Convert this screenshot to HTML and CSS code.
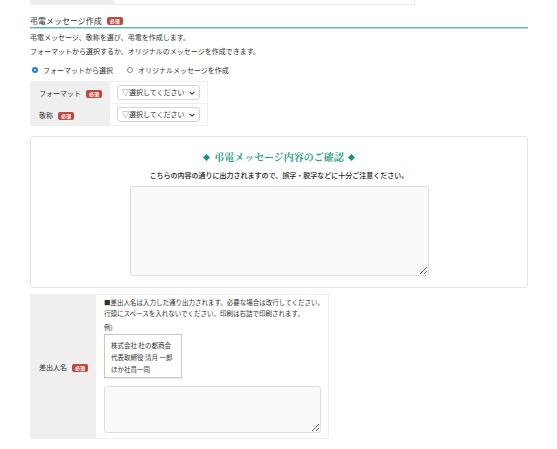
FILE: index.html
```html
<!DOCTYPE html>
<html lang="ja">
<head>
<meta charset="utf-8">
<title>弔電メッセージ作成</title>
<link rel="stylesheet" href="styles.css">
</head>
<body>
<div class="page">
  <div class="prev-row"><div class="prev-label"></div><div class="prev-value"></div></div>

  <h2 class="sec-title">弔電メッセージ作成<span class="badge">必須</span></h2>
  <p class="desc">弔電メッセージ、敬称を選び、弔電を作成します。<br>フォーマットから選択するか、オリジナルのメッセージを作成できます。</p>

  <div class="radios">
    <label class="radio"><span class="dot checked"></span>フォーマットから選択</label>
    <label class="radio"><span class="dot"></span>オリジナルメッセージを作成</label>
  </div>

  <table class="fmt-table">
    <tr>
      <th>フォーマット<span class="badge">必須</span></th>
      <td><div class="select">▽選択してください<svg class="chev" viewBox="0 0 8 5" width="6" height="4"><path d="M1 1l3 3 3-3" fill="none" stroke="#333" stroke-width="1.4"/></svg></div></td>
    </tr>
    <tr>
      <th>敬称<span class="badge">必須</span></th>
      <td><div class="select">▽選択してください<svg class="chev" viewBox="0 0 8 5" width="6" height="4"><path d="M1 1l3 3 3-3" fill="none" stroke="#333" stroke-width="1.4"/></svg></div></td>
    </tr>
  </table>

  <div class="preview">
    <h3 class="preview-title"><span class="diamond"></span>弔電メッセージ内容のご確認<span class="diamond"></span></h3>
    <p class="preview-note">こちらの内容の通りに出力されますので、誤字・脱字などに十分ご注意ください。</p>
    <textarea class="preview-area" readonly></textarea>
  </div>

  <table class="sender-table">
    <tr>
      <th>差出人名<span class="badge">必須</span></th>
      <td>
        <p class="note">■差出人名は入力した通り出力されます。必要な場合は改行してください。<br>行頭にスペースを入れないでください。印刷は右詰で印刷されます。</p>
        <p class="ex-label">例)</p>
        <div class="example">株式会社 杜の都商会<br>代表取締役 清月 一郎<br>ほか社員一同</div>
        <textarea class="sender-area"></textarea>
      </td>
    </tr>
  </table>
</div>
</body>
</html>
```

FILE: styles.css
```css
* { box-sizing: border-box; }
html, body { margin: 0; padding: 0; background: #fff; }
body {
  font-family: "Noto Sans CJK JP", "Noto Sans", sans-serif;
  color: #333;
  font-size: 7px;
}
.page { padding: 0 29px 0 30px; }

.prev-row { display: flex; width: 385px; height: 5px; border-bottom: 1px solid #ececec; border-right: 1px solid #ececec; }
.prev-label { width: 85px; background: #efefef; }
.prev-value { flex: 1; }

.sec-title {
  margin: 9px 0 0;
  font-size: 8px;
  font-weight: normal;
  line-height: 13px;
  display: flex;
  align-items: center;
  border-bottom: 1px solid #5ebbaa;
  box-shadow: 0 1px 0 #b3e2d8;
}
.badge {
  display: inline-block;
  background: #bd4a40;
  color: #fff;
  font-size: 5px;
  line-height: 8px;
  height: 8px;
  padding: 0 3px;
  border-radius: 2px;
  margin-left: 5px;
  font-weight: bold;
}
.desc { margin: 2px 0 0; line-height: 14px; }

.radios { display: flex; margin-top: 5px; line-height: 14px; padding-left: 2px; }
.radio { display: flex; align-items: center; margin-right: 14px; }
.dot {
  width: 6px; height: 6px; border-radius: 50%;
  border: 1px solid #888; margin-right: 5px; background: #fff;
}
.dot.checked { border: 2px solid #1f7cf0; background: #fff; }

.fmt-table { border-collapse: collapse; margin-top: 4px; }
.fmt-table th, .fmt-table td { border: 1px solid #f0f0f0; height: 22px; padding: 0; }
.fmt-table th {
  width: 79px; background: #efefef; font-weight: normal; text-align: left;
  padding-left: 8px;
}
.fmt-table td { width: 98px; padding-left: 7px; }
.select {
  width: 83px; height: 15px; border: 1px solid #d6d6d6; border-radius: 3px;
  display: flex; align-items: center; justify-content: space-between;
  padding: 0 4px 0 4px; background: #fff; line-height: 13px;
}
.chev { display: block; }

.preview {
  margin-top: 10px;
  border: 1px solid #e4e4e4;
  border-radius: 4px;
  padding: 13px 0 11px;
  display: flex; flex-direction: column; align-items: center;
}
.preview-title {
  margin: 0; font-size: 10px; font-weight: bold; line-height: 14px;
  color: #2b9f88;
  font-family: "Noto Serif CJK JP", "Noto Sans CJK JP", serif;
  display: flex; align-items: center;
}
.diamond {
  width: 5px; height: 5px; background: #14977a; transform: rotate(45deg);
  margin: 0 5px;
}
.preview-note { margin: 5px 0 0; font-weight: 500; line-height: 12px; color: #222; }
.preview-area {
  margin-top: 5px; width: 299px; height: 90px;
  background: #fafafa; border: 1px solid #dedede; border-radius: 3px;
  display: block;
}

.sender-table { border-collapse: collapse; margin-top: 6px; }
.sender-table th, .sender-table td { border: 1px solid #f0f0f0; padding: 0; vertical-align: middle; }
.sender-table th {
  width: 65px; background: #efefef; font-weight: normal; text-align: left; padding-left: 8px;
  white-space: nowrap;
}
.sender-table td { width: 233px; padding: 2px 0 5px 8px; vertical-align: top; }
.note { margin: 0; font-size: 6.5px; line-height: 10.5px; white-space: nowrap; }
.ex-label { margin: 4px 0 0; line-height: 10px; font-size: 6.5px; }
.example {
  margin-top: 2px; width: 78px; height: 44px; border: 1px solid #c8c8c8;
  box-shadow: 0 1px 1px rgba(0,0,0,0.08);
  padding: 4px 0 4px 6px; line-height: 12px; font-size: 6.5px;
  white-space: nowrap; overflow: hidden;
}
.sender-area {
  display: block; margin-top: 8px; width: 217px; height: 47px;
  background: #fafafa; border: 1px solid #dedede; border-radius: 3px;
}
```
